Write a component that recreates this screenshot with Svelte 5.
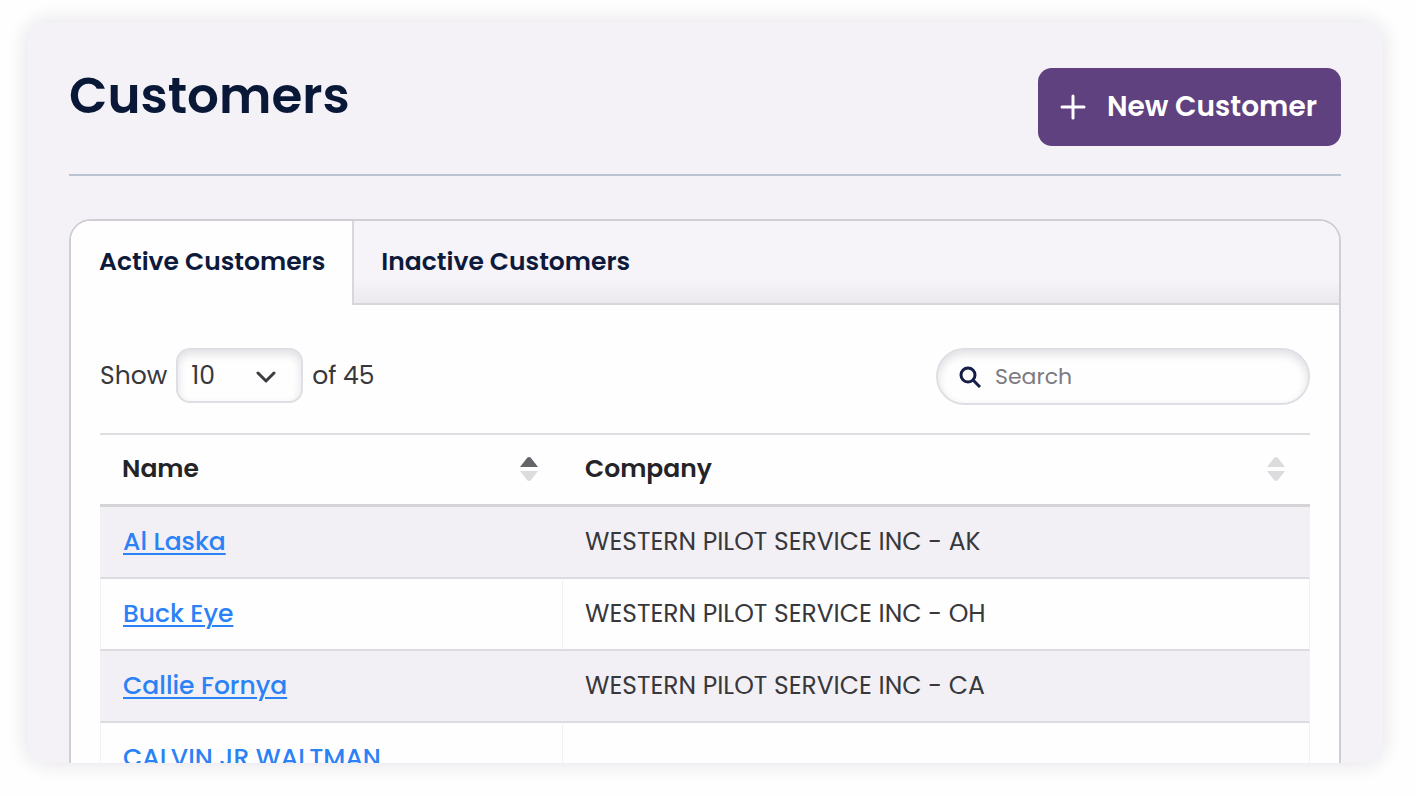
<script>
  let activeTab = $state("active");
  let pageSize = $state("10");
  let search = $state("");

  const tabs = [
    { id: "active", label: "Active Customers" },
    { id: "inactive", label: "Inactive Customers" },
  ];

  const columns = [
    { label: "Name", sorted: true },
    { label: "Company", sorted: false },
  ];

  const customers = [
    { name: "Al Laska", company: "WESTERN PILOT SERVICE INC - AK" },
    { name: "Buck Eye", company: "WESTERN PILOT SERVICE INC - OH" },
    { name: "Callie Fornya", company: "WESTERN PILOT SERVICE INC - CA" },
    { name: "CALVIN JR WALTMAN", company: "" },
  ];

  let rows = $derived(
    customers.filter((c) => c.name.toLowerCase().includes(search.toLowerCase()))
  );
</script>

<main class="page">
  <header class="page-header">
    <h1>Customers</h1>
    <button class="new-button" type="button">
      <svg width="26" height="26" viewBox="0 0 26 26" aria-hidden="true">
        <path d="M13 2v22M2 13h22" stroke="currentColor" stroke-width="3" stroke-linecap="round" />
      </svg>
      New Customer
    </button>
  </header>

  <section class="panel">
    <div class="tabs" role="tablist">
      {#each tabs as tab}
        <button
          type="button"
          role="tab"
          class="tab"
          class:selected={activeTab === tab.id}
          aria-selected={activeTab === tab.id}
          onclick={() => (activeTab = tab.id)}
        >
          {tab.label}
        </button>
      {/each}
    </div>

    <div class="panel-body">
      <div class="toolbar">
        <div class="page-size">
          <label for="page-size">Show</label>
          <span class="select-wrap">
            <select id="page-size" bind:value={pageSize}>
              <option>10</option>
              <option>25</option>
              <option>50</option>
            </select>
            <svg width="20" height="14" viewBox="0 0 20 14" aria-hidden="true">
              <path d="M2 3l8 8 8-8" fill="none" stroke="#3c3c40" stroke-width="3" stroke-linecap="round" stroke-linejoin="round" />
            </svg>
          </span>
          <span>of 45</span>
        </div>

        <label class="search">
          <svg width="22" height="22" viewBox="0 0 22 22" aria-hidden="true">
            <circle cx="9" cy="9" r="7" fill="none" stroke="#141d45" stroke-width="3" />
            <path d="M14 14l7 7" stroke="#141d45" stroke-width="3" />
          </svg>
          <input type="search" placeholder="Search" aria-label="Search" bind:value={search} />
        </label>
      </div>

      <table>
        <thead>
          <tr>
            {#each columns as column}
              <th scope="col">
                <div class="heading">
                  {column.label}
                  <svg class:sorted={column.sorted} width="18" height="24" viewBox="0 0 18 24" aria-hidden="true">
                    <path class="up" d="M0 10L7 1q2-2 4 0l7 9z" />
                    <path class="down" d="M0 14h18l-7 9q-2 2-4 0z" />
                  </svg>
                </div>
              </th>
            {/each}
          </tr>
        </thead>
        <tbody>
          {#each rows as customer}
            <tr>
              <td><a href="#customer">{customer.name}</a></td>
              <td>{customer.company}</td>
            </tr>
          {/each}
        </tbody>
      </table>
    </div>
  </section>
</main>

<style>
  :global(body) {
    background: #fefefe;
  }

  .page {
    box-sizing: border-box;
    height: calc(100vh - 55px);
    margin: 22px 33px 33px 27px;
    padding: 46px 42px 0;
    overflow: hidden;
    border-radius: 20px;
    background: #f4f2f7;
    box-shadow: 0 0 20px rgba(50, 30, 70, 0.14);
    font-family: Poppins, Inter, "Liberation Sans", sans-serif;
    font-size: 25px;
    color: #38383c;
  }

  button,
  select,
  input {
    font: inherit;
    color: inherit;
  }

  .page-header {
    display: flex;
    justify-content: space-between;
    align-items: flex-start;
    padding-bottom: 28px;
    border-bottom: 2px solid #bbc5d2;
  }

  h1 {
    margin: 0;
    font-size: 50px;
    font-weight: 600;
    line-height: 56px;
    color: #0a1838;
  }

  .new-button {
    display: flex;
    align-items: center;
    gap: 21px;
    height: 78px;
    padding: 0 24px 0 22px;
    border: none;
    border-radius: 14px;
    background: #5f417f;
    color: #fff;
    font-size: 28px;
    font-weight: 600;
  }

  .panel {
    margin-top: 43px;
    border: 2px solid #d0ced4;
    border-radius: 22px 22px 0 0;
    overflow: hidden;
    background: #fefefe;
  }

  .tabs {
    display: flex;
    background: linear-gradient(#f6f4f8 70%, #eae8ec);
    box-shadow: inset 0 -2px #d8d6da;
  }

  .tab {
    height: 84px;
    padding: 0 27px 2px;
    border: none;
    background: none;
    color: #0e1a3c;
    font-weight: 600;
  }

  .tab.selected {
    padding-left: 28px;
    border-right: 2px solid #d8d6da;
    background: #fefefe;
  }

  .panel-body {
    padding: 43px 29px 0;
  }

  .toolbar {
    display: flex;
    justify-content: space-between;
    align-items: flex-start;
    margin-bottom: 28px;
  }

  .page-size {
    display: flex;
    align-items: center;
    gap: 9px;
  }

  .select-wrap {
    position: relative;
    display: flex;
  }

  .select-wrap svg {
    position: absolute;
    right: 27px;
    top: 22px;
    pointer-events: none;
  }

  select {
    appearance: none;
    width: 127px;
    height: 55px;
    padding: 0 13px;
    border: 2px solid #e0dee4;
    border-radius: 14px;
    background: #fefefe;
    box-shadow: inset 0 4px 8px rgba(40, 30, 50, 0.14);
  }

  .search {
    box-sizing: border-box;
    display: flex;
    align-items: center;
    gap: 14px;
    width: 374px;
    height: 57px;
    padding: 0 21px;
    border: 2px solid #e0dee4;
    border-radius: 29px;
    box-shadow: inset 0 4px 8px rgba(40, 30, 50, 0.14);
  }

  .search input {
    flex: 1;
    min-width: 0;
    padding: 0;
    border: none;
    outline: none;
    background: none;
    font-size: 22px;
  }

  .search input::placeholder {
    color: #7b7a80;
  }

  table {
    width: 100%;
    table-layout: fixed;
    border-collapse: separate;
    border-spacing: 0;
    border-top: 2px solid #e0dee3;
  }

  th,
  td {
    box-sizing: border-box;
    height: 72px;
    padding: 0 22px;
    text-align: left;
    border-bottom: 2px solid #dddbe0;
  }

  th {
    padding-bottom: 2px;
    border-bottom: 3px solid #d4d3d6;
    font-weight: 600;
    color: #242428;
  }

  th:first-child {
    width: 463px;
  }

  td {
    border-right: 1px solid #f2f0f4;
  }

  td:first-child {
    border-left: 1px solid #f2f0f4;
  }

  tbody tr:nth-child(odd) td {
    background: #f2f0f4;
  }

  .heading {
    display: flex;
    justify-content: space-between;
    align-items: center;
    padding-right: 3px;
  }

  .heading path {
    fill: #dcdbde;
  }

  .heading .sorted .up {
    fill: #656468;
  }

  a {
    color: #2b82f6;
    font-weight: 500;
    text-decoration-thickness: 2px;
    text-underline-offset: 3px;
  }
</style>
